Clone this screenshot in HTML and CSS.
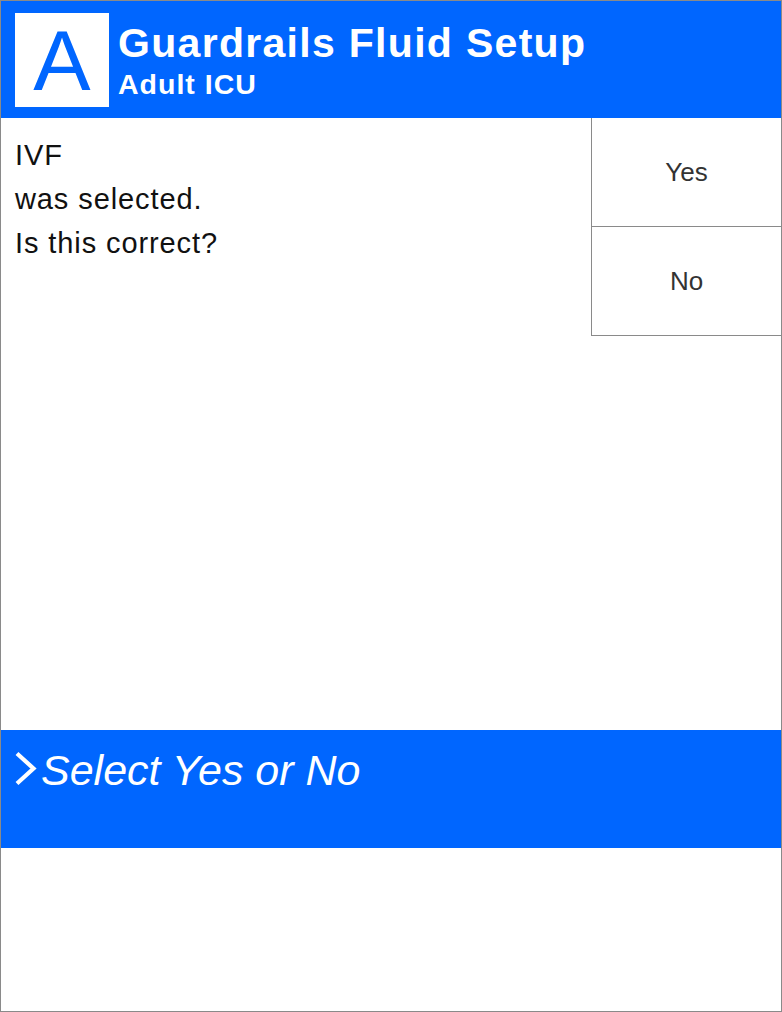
FILE: index.html
```html
<!DOCTYPE html>
<html>
<head>
<meta charset="utf-8">
<link rel="stylesheet" href="styles.css">
</head>
<body>
<div class="frame">
  <header class="header">
    <div class="logo">A</div>
    <div class="titles">
      <div class="title">Guardrails Fluid Setup</div>
      <div class="subtitle">Adult ICU</div>
    </div>
  </header>
  <main class="main">
    <div class="message">
      <div class="line">IVF</div>
      <div class="line">was selected.</div>
      <div class="line">Is this correct?</div>
    </div>
    <div class="choices">
      <div class="choice">Yes</div>
      <div class="choice">No</div>
    </div>
  </main>
  <div class="prompt">
    <svg class="chevron" width="24" height="36" viewBox="0 0 24 36"><polyline points="3,2.5 19.5,17.5 3,32.5" fill="none" stroke="#fff" stroke-width="4.2"/></svg>
    <span class="prompt-text">Select Yes or No</span>
  </div>
  <div class="footer"></div>
</div>
</body>
</html>
```
FILE: styles.css
```css
html, body {
  margin: 0;
  padding: 0;
  background: #fff;
}
.frame {
  width: 782px;
  height: 1012px;
  box-sizing: border-box;
  border: 1px solid #8a8a8a;
  display: flex;
  flex-direction: column;
  font-family: "Liberation Sans", Arial, sans-serif;
}
.header {
  height: 117px;
  flex: none;
  background: #0066ff;
  display: flex;
  align-items: center;
  padding-left: 14px;
  box-sizing: border-box;
}
.logo {
  width: 94px;
  height: 94px;
  background: #fff;
  color: #0066ff;
  font-size: 86px;
  line-height: 94px;
  text-align: center;
  flex: none;
}
.titles {
  margin-left: 9px;
  margin-top: 4px;
  color: #fff;
  font-weight: bold;
  display: flex;
  flex-direction: column;
}
.title {
  font-size: 41px;
  letter-spacing: 1.3px;
  line-height: 44px;
}
.subtitle {
  font-size: 28.5px;
  letter-spacing: 1px;
  line-height: 38px;
}
.main {
  height: 612px;
  flex: none;
  display: flex;
}
.message {
  flex: 1;
  padding-left: 14px;
  padding-top: 15px;
  font-size: 29px;
  letter-spacing: 0.9px;
  color: #111;
}
.line {
  line-height: 44px;
}
.choices {
  width: 190px;
  flex: none;
  display: flex;
  flex-direction: column;
}
.choice {
  height: 108px;
  border-left: 1px solid #8a8a8a;
  border-bottom: 1px solid #8a8a8a;
  display: flex;
  align-items: center;
  justify-content: center;
  font-size: 26px;
  color: #333;
}
.prompt {
  height: 118px;
  flex: none;
  background: #0066ff;
  display: flex;
  align-items: flex-start;
  padding: 20px 0 0 13px;
  box-sizing: border-box;
  color: #fff;
}
.chevron {
  margin-top: 1px;
  flex: none;
}
.prompt-text {
  font-style: italic;
  font-size: 43px;
  line-height: 40px;
  margin-left: 3px;
}
.footer {
  flex: 1;
}
```
